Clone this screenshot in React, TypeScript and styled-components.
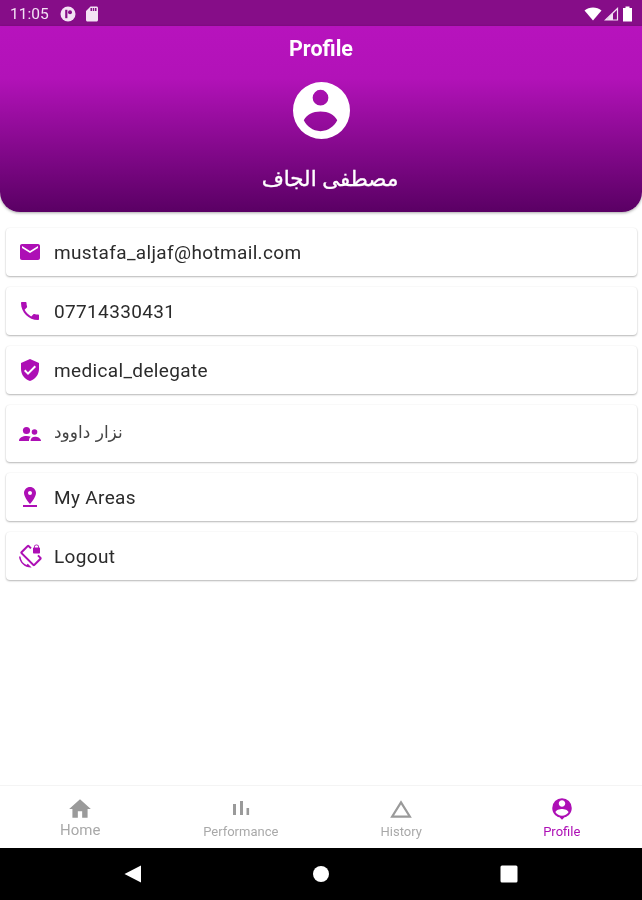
import React from 'react'
import styled, { createGlobalStyle } from 'styled-components'
import {
  MdEmail,
  MdPhone,
  MdVerifiedUser,
  MdPinDrop,
  MdScreenLockRotation,
  MdHome,
  MdChangeHistory,
  MdPersonPin,
  MdSdCard,
} from 'react-icons/md'

const GlobalStyle = createGlobalStyle`
    html, body { margin: 0; padding: 0; background: #fff; }
    body { font-family: Roboto, "Noto Sans", sans-serif; }
`

const Page = styled.div`
    width: 642px;
    height: 900px;
    display: flex;
    flex-direction: column;
    overflow: hidden;
    background: #fff;
    filter: blur(0.4px);
`

const StatusBar = styled.div`
    flex: 0 0 26px;
    display: flex;
    align-items: center;
    justify-content: space-between;
    padding: 1px 9px 0 10px;
    box-sizing: border-box;
    background: #860d88;
    color: #f3e2f4;
    font-size: 15.5px;
`

const StatusGroup = styled.div<{ $gap: number }>`
    display: flex;
    align-items: center;
    gap: ${(p) => p.$gap}px;
`

const SdIcon = styled(MdSdCard)`
    margin-left: -4px;
`

const BatteryIcon = styled.svg`
    margin-left: 1px;
`

const Header = styled.header`
    flex: 0 0 186px;
    display: flex;
    flex-direction: column;
    align-items: center;
    box-sizing: border-box;
    padding-top: 10px;
    color: #fff;
    background: linear-gradient(180deg, #b713bd 0%, #b212b8 28%, #5a0064 100%);
    border-radius: 0 0 20px 20px;
    box-shadow: 0 1px 3px rgba(0,0,0,0.35);
`

const Title = styled.h1`
    margin: 0;
    font-size: 21.5px;
    line-height: 26px;
    font-weight: 700;
`

const Avatar = styled.svg`
    margin-top: 20px;
`

const UserName = styled.div`
    margin: 24px 0 0 18px;
    font-family: "Noto Sans", "DejaVu Sans", sans-serif;
    font-size: 21.4px;
    line-height: 30px;
    font-weight: 400;
    -webkit-text-stroke: 0.35px #fff;
`

const List = styled.main`
    flex: 1;
    display: flex;
    flex-direction: column;
    gap: 11px;
    padding: 16px 5px 0 6px;
`

const Row = styled.div<{ $tall?: boolean }>`
    height: ${(p) => (p.$tall ? 57 : 48)}px;
    display: flex;
    align-items: center;
    gap: 12px;
    padding: 0 12px;
    background: #fff;
    border-radius: 4px;
    box-shadow: 0 1px 2px rgba(0,0,0,0.28), 0 0 2px rgba(0,0,0,0.06);
    color: #2b2b2b;
    font-size: 19px;
    letter-spacing: 0.35px;
    svg { flex: 0 0 24px; color: #ad0fb5; }
`

const ArabicText = styled.span`
    font-family: "DejaVu Sans", "Noto Sans", sans-serif;
    font-size: 17px;
    letter-spacing: 0;
    color: #444;
    padding-bottom: 4px;
`

const BottomNav = styled.nav`
    flex: 0 0 63px;
    display: grid;
    grid-template-columns: repeat(4, 1fr);
    background: #fff;
    border-top: 1px solid #f4f4f4;
    box-sizing: border-box;
`

const NavItem = styled.div<{ $active?: boolean; $big?: boolean }>`
    display: flex;
    flex-direction: column;
    align-items: center;
    padding-top: 10px;
    color: ${(p) => (p.$active ? '#ad0fb5' : '#9a9a9a')};
    font-size: ${(p) => (p.$big ? 15 : 13)}px;
    line-height: 18px;
    svg { flex: 0 0 26px; }
    span { margin-top: ${(p) => (p.$big ? -1 : 1)}px; opacity: ${(p) => (p.$active ? 1 : 0.85)}; }
`

const AndroidBar = styled.div`
    flex: 0 0 52px;
    display: flex;
    align-items: center;
    justify-content: center;
    gap: 170px;
    padding-right: 1px;
    background: #000;
`

const PeopleIcon = () => (
  <svg width="24" height="24" viewBox="0 0 24 24" fill="currentColor">
    <circle cx="8.5" cy="8.5" r="3.6" />
    <circle cx="16.5" cy="10" r="2.8" />
    <path d="M1 19c0-3.4 3.6-5 7.5-5 1.6 0 3 .3 4.2.8-1 .8-1.7 2-1.7 4.2z" />
    <path d="M12.5 19c0-2.8 2-4.3 4.5-4.3s6 1.5 6 4.3z" />
  </svg>
)

const BarsIcon = () => (
  <svg width="26" height="26" viewBox="0 0 26 26" fill="currentColor">
    <rect x="5" y="8" width="3" height="11" />
    <rect x="12" y="5" width="3" height="14" />
    <rect x="18.5" y="12" width="2.6" height="7" />
  </svg>
)

const rows = [
  { icon: <MdEmail size={24} />, text: 'mustafa_aljaf@hotmail.com' },
  { icon: <MdPhone size={24} />, text: '07714330431' },
  { icon: <MdVerifiedUser size={24} />, text: 'medical_delegate' },
  { icon: <PeopleIcon />, text: <ArabicText dir="rtl">نزار داوود</ArabicText>, tall: true },
  { icon: <MdPinDrop size={24} />, text: 'My Areas' },
  { icon: <MdScreenLockRotation size={25} />, text: 'Logout' },
]

const tabs = [
  { icon: <MdHome size={26} />, label: 'Home', big: true },
  { icon: <BarsIcon />, label: 'Performance' },
  { icon: <MdChangeHistory size={26} />, label: 'History' },
  { icon: <MdPersonPin size={26} />, label: 'Profile', active: true },
]

const App = () => {
  return (
    <Page>
      <GlobalStyle />
      <StatusBar>
        <StatusGroup $gap={11}>
          <span>11:05</span>
          <svg width="16" height="16" viewBox="0 0 16 16">
            <circle cx="8" cy="8" r="7.5" fill="#f3e2f4" />
            <rect x="5.2" y="3.8" width="2.2" height="8.4" fill="#860d88" />
            <circle cx="10" cy="6.2" r="2" fill="#860d88" />
          </svg>
          <SdIcon size={18} />
        </StatusGroup>
        <StatusGroup $gap={2}>
          <svg width="18" height="14" viewBox="0 0 18 14">
            <path d="M0.5 3.5C5 -0.5 13 -0.5 17.5 3.5L9 13.5Z" fill="#fff" />
          </svg>
          <svg width="15" height="14" viewBox="0 0 15 14">
            <path d="M13.5 1.5V13H1.5Z" fill="none" stroke="#f3e2f4" strokeWidth="1.2" />
            <path d="M9 6V13H2.5Z" fill="#f3e2f4" />
          </svg>
          <BatteryIcon width="11" height="16" viewBox="0 0 11 16">
            <path d="M3.5 0.5H7.5V2H10V15.5H1V2H3.5Z" fill="#fff" />
          </BatteryIcon>
        </StatusGroup>
      </StatusBar>
      <Header>
        <Title>Profile</Title>
        <Avatar width="57" height="57" viewBox="0 0 58 58">
          <path
            fill="#fff"
            fillRule="evenodd"
            d="M29 0a29 29 0 1 0 0 58a29 29 0 1 0 0-58zM28 8a8 8 0 1 1 0 16a8 8 0 1 1 0-16zM11 39C14 33 20 30 28 30S42 33 45 39C42 45 36 50 28 50S14 45 11 39z"
          />
        </Avatar>
        <UserName dir="rtl">مصطفى الجاف</UserName>
      </Header>
      <List>
        {rows.map((row, i) => (
          <Row key={i} $tall={row.tall}>
            {row.icon}
            {row.text}
          </Row>
        ))}
      </List>
      <BottomNav>
        {tabs.map((tab) => (
          <NavItem key={tab.label} $active={tab.active} $big={tab.big}>
            {tab.icon}
            <span>{tab.label}</span>
          </NavItem>
        ))}
      </BottomNav>
      <AndroidBar>
        <svg width="18" height="18" viewBox="0 0 18 18">
          <path d="M17 0.5V17.5L0.5 9Z" fill="#fff" />
        </svg>
        <svg width="18" height="18" viewBox="0 0 18 18">
          <circle cx="9" cy="9" r="8" fill="#fff" />
        </svg>
        <svg width="18" height="18" viewBox="0 0 18 18">
          <rect x="0.5" y="0.5" width="17" height="17" rx="1.5" fill="#fff" />
        </svg>
      </AndroidBar>
    </Page>
  )
}

export default App
